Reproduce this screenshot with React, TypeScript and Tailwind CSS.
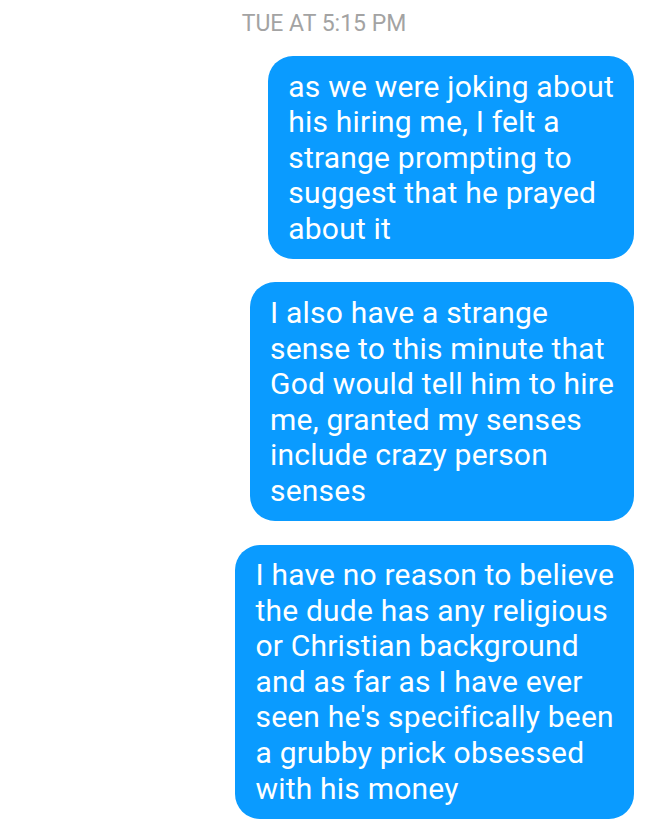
const messages = [
  [
    "as we were joking about",
    "his hiring me, I felt a",
    "strange prompting to",
    "suggest that he prayed",
    "about it",
  ],
  [
    "I also have a strange",
    "sense to this minute that",
    "God would tell him to hire",
    "me, granted my senses",
    "include crazy person",
    "senses",
  ],
  [
    "I have no reason to believe",
    "the dude has any religious",
    "or Christian background",
    "and as far as I have ever",
    "seen he's specifically been",
    "a grubby prick obsessed",
    "with his money",
  ],
];

export default function App() {
  return (
    <div className="w-[648px] h-[836px] bg-white overflow-hidden font-['Roboto',sans-serif]">
      <div className="pt-[10px] text-center text-[23px] leading-[28px] text-[#a3a3a3]">
        TUE AT 5:15 PM
      </div>
      <div className="flex flex-col items-end gap-[23.5px] pr-[14px] mt-[18px]">
        {messages.map((lines, i) => (
          <div
            key={i}
            className="bg-[#0a9bff] text-white rounded-[25px] px-[20px] py-[12.5px] text-[30px] leading-[35.6px] tracking-[0.2px]"
          >
            {lines.map((line, j) => (
              <div key={j} className="whitespace-nowrap">
                {line}
              </div>
            ))}
          </div>
        ))}
      </div>
    </div>
  );
}
